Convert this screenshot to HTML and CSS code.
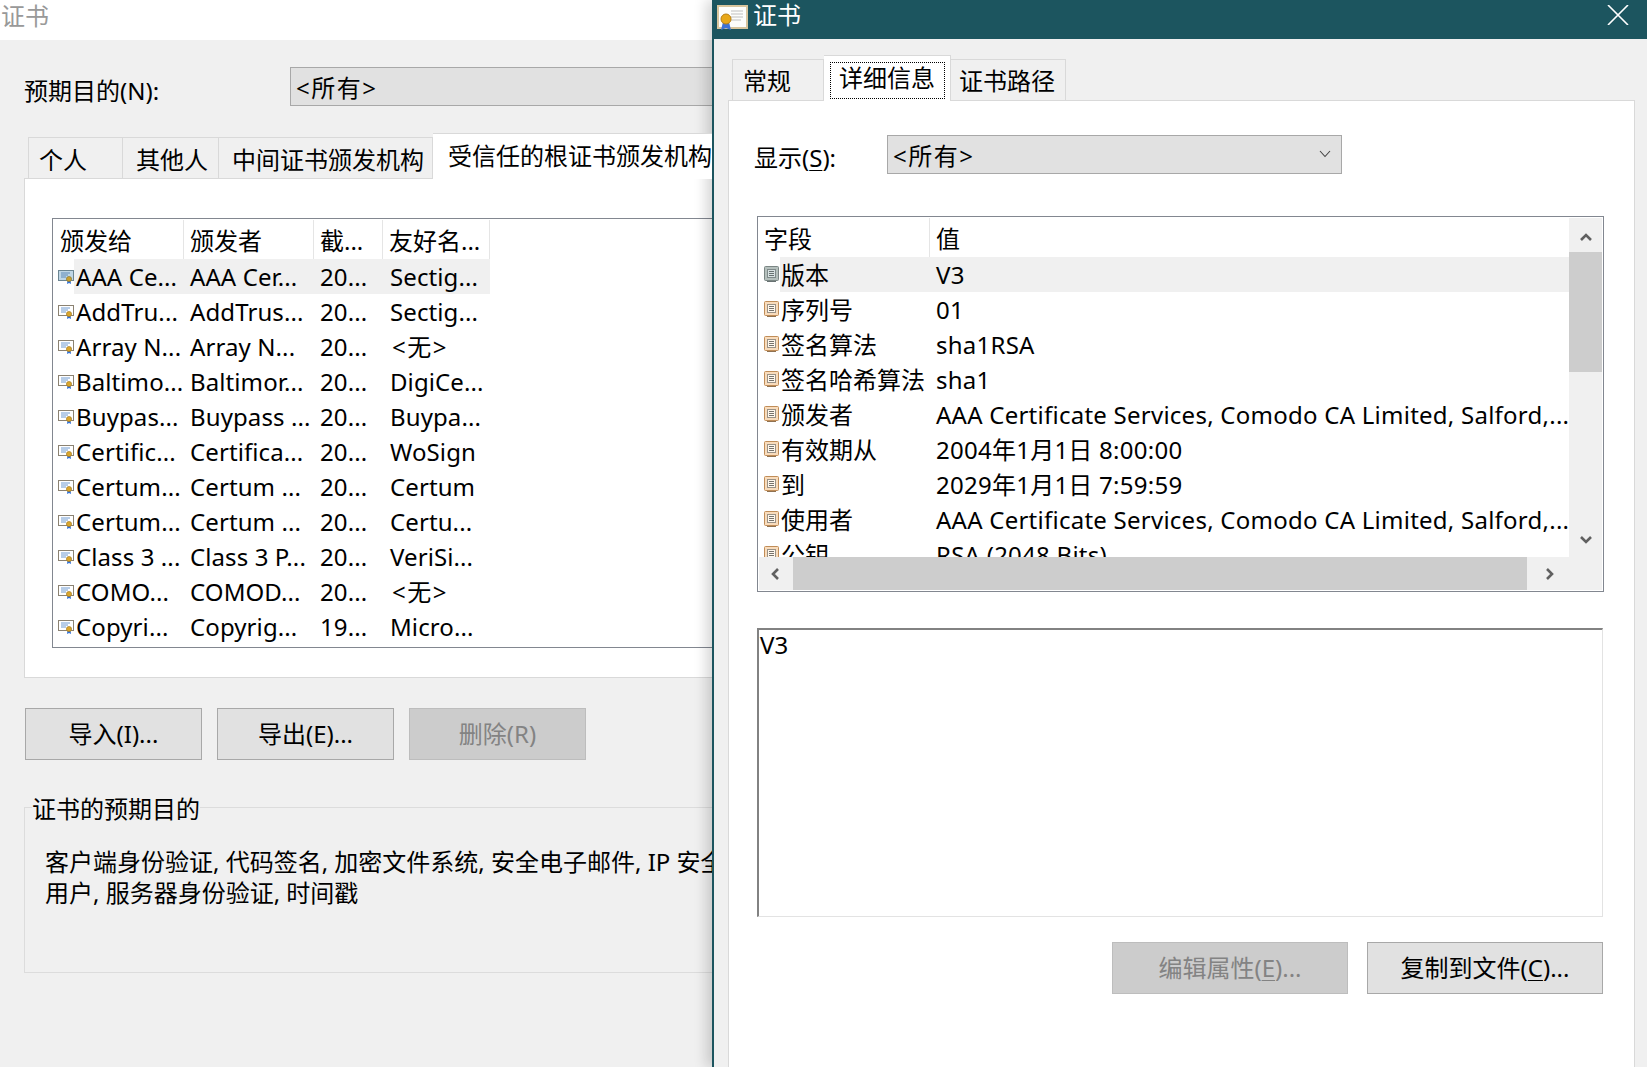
FILE: index.html
```html
<!DOCTYPE html>
<html lang="zh-CN">
<head>
<meta charset="utf-8">
<title>证书</title>
<link rel="stylesheet" href="styles.css">
</head>
<body>
<svg class="defs" width="0" height="0" aria-hidden="true">
  <symbol id="cert" viewBox="0 0 16 14">
    <rect x=".5" y=".5" width="15" height="10" fill="#fff" stroke="#8b8272"/>
    <path d="M3 3h9M3 5h7M3 7h5" stroke="#6f9ad0" fill="none"/>
    <path d="M9.5 10l-.5 4 2-1 2 1-.5-4z" fill="#2f6fd8"/>
    <circle cx="11" cy="9" r="2.6" fill="#d9a52c" stroke="#9c7420" stroke-width=".6"/>
  </symbol>
  <symbol id="cert-dim" viewBox="0 0 16 14">
    <rect x=".5" y=".5" width="15" height="10" fill="#bfd6e6" stroke="#6b8592"/>
    <path d="M3 3h9M3 5h7M3 7h5" stroke="#5f8ab8" fill="none"/>
    <path d="M9.5 10l-.5 4 2-1 2 1-.5-4z" fill="#2f6fd8"/>
    <circle cx="11" cy="9" r="2.6" fill="#c9a030" stroke="#7f7030" stroke-width=".6"/>
  </symbol>
  <symbol id="field" viewBox="0 0 15 16">
    <rect x=".5" y=".5" width="14" height="14" rx="1" fill="#f9dcbc" stroke="#c08d58"/>
    <rect x="3.5" y="3.5" width="8" height="8" fill="#fff8ee" stroke="#9a9286"/>
    <path d="M5 5.5h5M5 7.5h5M5 9.5h5" stroke="#77736c"/>
    <path d="M3 15h9v1H3z" fill="#8f7252"/>
  </symbol>
  <symbol id="field-dim" viewBox="0 0 15 16">
    <rect x=".5" y=".5" width="14" height="14" rx="1" fill="#b5c0bd" stroke="#7b8684"/>
    <rect x="3.5" y="3.5" width="8" height="8" fill="#d8e2e2" stroke="#7f8a8a"/>
    <path d="M5 5.5h5M5 7.5h5M5 9.5h5" stroke="#687272"/>
    <path d="M3 15h9v1H3z" fill="#687272"/>
  </symbol>
</svg>

<section class="win-left">
  <header class="left-title">证书</header>
  <div class="left-body">
    <div class="purpose">
      <span class="purpose-label">预期目的(N):</span>
      <div class="select select-wide">&lt;所有&gt;</div>
    </div>
    <nav class="tabs tabs-left">
      <span class="tab tab-a">个人</span>
      <span class="tab tab-b">其他人</span>
      <span class="tab tab-c">中间证书颁发机构</span>
      <span class="tab tab-d tab-active">受信任的根证书颁发机构</span>
    </nav>
    <div class="panel-left">
      <div class="list-left">
        <div class="head-left">
          <span class="hcell">颁发给</span><span class="hcell">颁发者</span><span class="hcell">截...</span><span class="hcell">友好名...</span>
        </div>
        <div class="row-left sel"><svg class="ico-cert"><use href="#cert-dim"/></svg><span class="c1">AAA Ce...</span><span class="c">AAA Cer...</span><span class="c">20...</span><span class="c">Sectig...</span></div>
        <div class="row-left"><svg class="ico-cert"><use href="#cert"/></svg><span class="c1">AddTru...</span><span class="c">AddTrus...</span><span class="c">20...</span><span class="c">Sectig...</span></div>
        <div class="row-left"><svg class="ico-cert"><use href="#cert"/></svg><span class="c1">Array N...</span><span class="c">Array N...</span><span class="c">20...</span><span class="c c-none">&lt;无&gt;</span></div>
        <div class="row-left"><svg class="ico-cert"><use href="#cert"/></svg><span class="c1">Baltimo...</span><span class="c">Baltimor...</span><span class="c">20...</span><span class="c">DigiCe...</span></div>
        <div class="row-left"><svg class="ico-cert"><use href="#cert"/></svg><span class="c1">Buypas...</span><span class="c">Buypass ...</span><span class="c">20...</span><span class="c">Buypa...</span></div>
        <div class="row-left"><svg class="ico-cert"><use href="#cert"/></svg><span class="c1">Certific...</span><span class="c">Certifica...</span><span class="c">20...</span><span class="c">WoSign</span></div>
        <div class="row-left"><svg class="ico-cert"><use href="#cert"/></svg><span class="c1">Certum...</span><span class="c">Certum ...</span><span class="c">20...</span><span class="c">Certum</span></div>
        <div class="row-left"><svg class="ico-cert"><use href="#cert"/></svg><span class="c1">Certum...</span><span class="c">Certum ...</span><span class="c">20...</span><span class="c">Certu...</span></div>
        <div class="row-left"><svg class="ico-cert"><use href="#cert"/></svg><span class="c1">Class 3 ...</span><span class="c">Class 3 P...</span><span class="c">20...</span><span class="c">VeriSi...</span></div>
        <div class="row-left"><svg class="ico-cert"><use href="#cert"/></svg><span class="c1">COMO...</span><span class="c">COMOD...</span><span class="c">20...</span><span class="c c-none">&lt;无&gt;</span></div>
        <div class="row-left"><svg class="ico-cert"><use href="#cert"/></svg><span class="c1">Copyri...</span><span class="c">Copyrig...</span><span class="c">19...</span><span class="c">Micro...</span></div>
      </div>
    </div>
    <div class="btns-left">
      <button class="btn btn-left">导入(I)...</button>
      <button class="btn btn-left">导出(E)...</button>
      <button class="btn btn-left btn-off">删除(R)</button>
    </div>
    <div class="group">
      <span class="legend">证书的预期目的</span>
      <p class="group-text">客户端身份验证, 代码签名, 加密文件系统, 安全电子邮件, IP 安全隧道终止, IP 安全<br>用户, 服务器身份验证, 时间戳</p>
    </div>
  </div>
</section>

<section class="win-right">
  <header class="right-title">
    <svg class="title-ico" viewBox="0 0 31 25">
      <rect x="1" y="1" width="29" height="22" fill="#fdfdfb" stroke="#d8c49c" stroke-width="2"/>
      <path d="M14 6h12M14 9h12M14 12h12M14 15h10" stroke="#d4d4d4" stroke-width="1.4"/>
      <path d="M6 17l-2 8 5-2 5 2-2-8z" fill="#3f73d6"/>
      <circle cx="9" cy="14" r="5" fill="#e8a818" stroke="#b87f12"/>
    </svg>
    <span class="title-text">证书</span>
    <svg class="close" viewBox="0 0 22 20"><path d="M1 0l20 20M21 0L1 20" stroke="#fff" stroke-width="1.6" fill="none"/></svg>
  </header>
  <div class="right-body">
    <nav class="tabs tabs-right">
      <span class="tab tab-e">常规</span>
      <span class="tab tab-f tab-active"><span class="focus">详细信息</span></span>
      <span class="tab tab-g">证书路径</span>
    </nav>
    <div class="panel-right">
      <div class="show">
        <span class="show-label">显示(<u>S</u>):</span>
        <div class="select select-show">&lt;所有&gt;
          <svg class="chev" viewBox="0 0 12 8"><path d="M1 1l5 5.5L11 1" stroke="#444" stroke-width="1.1" fill="none"/></svg>
        </div>
      </div>
      <div class="list-right">
        <div class="list-main">
          <div class="head-right"><span class="hcell">字段</span><span class="hcell hcell-v">值</span></div>
          <div class="row-right sel"><svg class="ico-field"><use href="#field-dim"/></svg><span class="f">版本</span><span class="v">V3</span></div>
          <div class="row-right"><svg class="ico-field"><use href="#field"/></svg><span class="f">序列号</span><span class="v">01</span></div>
          <div class="row-right"><svg class="ico-field"><use href="#field"/></svg><span class="f">签名算法</span><span class="v">sha1RSA</span></div>
          <div class="row-right"><svg class="ico-field"><use href="#field"/></svg><span class="f">签名哈希算法</span><span class="v">sha1</span></div>
          <div class="row-right"><svg class="ico-field"><use href="#field"/></svg><span class="f">颁发者</span><span class="v">AAA Certificate Services, Comodo CA Limited, Salford,...</span></div>
          <div class="row-right"><svg class="ico-field"><use href="#field"/></svg><span class="f">有效期从</span><span class="v">2004年1月1日 8:00:00</span></div>
          <div class="row-right"><svg class="ico-field"><use href="#field"/></svg><span class="f">到</span><span class="v">2029年1月1日 7:59:59</span></div>
          <div class="row-right"><svg class="ico-field"><use href="#field"/></svg><span class="f">使用者</span><span class="v">AAA Certificate Services, Comodo CA Limited, Salford,...</span></div>
          <div class="row-right"><svg class="ico-field"><use href="#field"/></svg><span class="f">公钥</span><span class="v">RSA (2048 Bits)</span></div>
        </div>
        <div class="vscroll">
          <svg class="arrow" viewBox="0 0 12 8"><path d="M1 7l5-5 5 5" stroke="#606060" stroke-width="2.6" fill="none"/></svg>
          <div class="vthumb"></div>
          <svg class="arrow arrow-down" viewBox="0 0 12 8"><path d="M1 1l5 5 5-5" stroke="#606060" stroke-width="2.6" fill="none"/></svg>
        </div>
        <div class="hscroll">
          <svg class="harrow" viewBox="0 0 8 12"><path d="M7 1L2 6l5 5" stroke="#606060" stroke-width="2.6" fill="none"/></svg>
          <div class="hthumb"></div>
          <svg class="harrow" viewBox="0 0 8 12"><path d="M1 1l5 5-5 5" stroke="#606060" stroke-width="2.6" fill="none"/></svg>
        </div>
        <div class="corner"></div>
      </div>
      <div class="detail">V3</div>
      <div class="btns-right">
        <button class="btn btn-right btn-off">编辑属性(<u>E</u>)...</button>
        <button class="btn btn-right">复制到文件(<u>C</u>)...</button>
      </div>
    </div>
  </div>
</section>
</body>
</html>
```

FILE: styles.css
```css
* { box-sizing: border-box; }
html, body { margin: 0; height: 100%; }
body {
  display: flex;
  width: 1647px;
  height: 1067px;
  overflow: hidden;
  background: #f0f0f0;
  color: #000;
  font: 24px/32px "Noto Sans", "Noto Sans CJK SC", sans-serif;
}
.defs { position: absolute; }
u { text-underline-offset: 3px; text-decoration-thickness: 1px; }

/* left window */
.win-left { width: 712px; flex: none; overflow: hidden; }
.left-title {
  height: 40px;
  background: #fff;
  color: #999;
  padding-left: 1px;
  line-height: 32px;
}
.left-body { width: 1000px; padding-left: 24px; }
.purpose { display: flex; align-items: center; height: 39px; margin-top: 27px; }
.purpose-label { width: 266px; flex: none; padding-top: 8px; }
.select {
  height: 39px;
  background: #e1e1e1;
  border: 1px solid #a8a8a8;
  line-height: 37px;
  padding: 1px 0 0 5px;
  letter-spacing: 1.5px;
  position: relative;
}
.select-wide { width: 600px; }

.tabs { display: flex; align-items: flex-end; }
.tab {
  height: 41px;
  border: 1px solid #d9d9d9;
  border-bottom: 0;
  border-left: 0;
  background: #f0f0f0;
  padding: 6px 0 0 13px;
  line-height: 32px;
  white-space: nowrap;
}
.tab-active {
  background: #fff;
  position: relative;
  z-index: 1;
  height: 46px;
  margin-bottom: -1px;
  padding-top: 6px;
}
.tabs-left { height: 45px; margin-top: 27px; padding-left: 4px; }
.tab-a { width: 95px; border-left: 1px solid #d9d9d9; padding-left: 10px; }
.tab-b { width: 96px; }
.tab-c { width: 214px; }
.tab-d { width: 400px; padding-left: 15px; }

.panel-left {
  height: 500px;
  background: #fff;
  border: 1px solid #d9d9d9;
  padding: 39px 0 0 27px;
}
.list-left {
  width: 900px;
  height: 430px;
  border: 1px solid #828790;
  padding-top: 1px;
  overflow: hidden;
}
.head-left {
  display: grid;
  grid-template-columns: 131px 130px 69px 107px;
  height: 39px;
  width: 437px;
}
.hcell {
  border-right: 1px solid #e5e5e5;
  padding: 5px 0 0 6px;
  line-height: 32px;
  white-space: nowrap;
}
.head-left .hcell:first-child { padding-left: 7px; }
.row-left {
  display: grid;
  grid-template-columns: 21px 110px 130px 69px 107px;
  height: 35px;
  line-height: 35px;
}
.ico-cert { width: 16px; height: 14px; margin: 11px 0 0 5px; }
.c1, .c, .f, .v { white-space: nowrap; overflow: hidden; }
.c1 { padding-left: 2px; }
.c1, .c { letter-spacing: .1px; }
.c { padding-left: 6px; }
.c:last-child { padding-left: 7px; }
.c.c-none { padding-left: 9px; letter-spacing: 1.5px; }
.sel > span { background: #f0f0f0; }

.btns-left { display: flex; gap: 15px; margin-top: 30px; margin-left: 1px; }
.btn {
  font: inherit;
  line-height: 32px;
  color: #000;
  background: #e1e1e1;
  border: 1px solid #a8a8a8;
  padding: 0;
  white-space: nowrap;
}
.btn-left { width: 177px; height: 52px; }
.btn-off { background: #cccccc; border-color: #bdbdbd; color: #838383; }

.group {
  position: relative;
  height: 166px;
  margin-top: 47px;
  border: 1px solid #dcdcdc;
  padding: 38px 0 0 20px;
}
.legend {
  position: absolute;
  left: 7px;
  top: -15px;
  background: #f0f0f0;
  white-space: nowrap;
}
.group-text { margin: 0; line-height: 31px; white-space: nowrap; }

/* right window */
.win-right {
  flex: 1;
  min-width: 0;
  border-left: 2px solid #1c555f;
  box-shadow: -6px 0 12px rgba(0, 0, 0, .16);
  position: relative;
  display: flex;
  flex-direction: column;
}
.right-title {
  height: 39px;
  flex: none;
  margin-left: -2px;
  background: #1c555f;
  color: #fff;
  display: flex;
  align-items: center;
  padding: 0 18px 0 5px;
}
.title-ico { width: 31px; height: 25px; flex: none; margin-top: -5px; }
.title-text { margin-left: 5px; margin-top: -10px; }
.close { width: 22px; height: 20px; margin-left: auto; margin-top: -9px; }
.right-body { flex: 1; padding: 16px 12px 0 14px; display: flex; flex-direction: column; background: #f0f0f0; }

.tabs-right { height: 45px; padding-left: 4px; }
.tabs-right .tab-e, .tabs-right .tab-g { padding-top: 5px; }
.tab-e { width: 92px; border-left: 1px solid #d9d9d9; padding-left: 10px; }
.tab-f { width: 127px; padding: 6px 0 0 6px; border-right: 1px solid #d9d9d9; border-top: 1px solid #d9d9d9; }
.focus {
  display: block;
  width: 115px;
  height: 37px;
  border: 1px dotted #000;
  line-height: 30px;
  padding-left: 8px;
}
.tab-g { width: 115px; padding-left: 8px; }

.panel-right {
  flex: 1;
  background: #fff;
  border: 1px solid #d9d9d9;
  border-bottom: 0;
  padding: 34px 31px 0 28px;
}
.show { display: flex; align-items: center; height: 39px; margin-left: -3px; }
.show-label { width: 133px; flex: none; padding-top: 7px; line-height: 32px; }
.select-show { width: 455px; }
.chev { position: absolute; right: 10px; top: 14px; width: 12px; height: 8px; }

.list-right {
  margin-top: 42px;
  width: 847px;
  height: 376px;
  border: 1px solid #828790;
  padding: 1px;
  display: grid;
  grid-template-columns: 810px 1fr;
  grid-template-rows: 339px 33px;
  background: #fff;
}
.list-main { overflow: hidden; }
.head-right {
  display: grid;
  grid-template-columns: 171px 1fr;
  height: 39px;
}
.head-right .hcell { padding-left: 5px; }
.head-right .hcell-v { border-right: 0; padding-left: 6px; }
.row-right {
  display: grid;
  grid-template-columns: 21px 150px 639px;
  height: 35px;
  line-height: 35px;
}
.ico-field { width: 15px; height: 16px; margin: 9px 0 0 5px; }
.f { padding-left: 1px; }
.v { padding-left: 6px; letter-spacing: .25px; }
.vscroll {
  background: #f0f0f0;
  display: flex;
  flex-direction: column;
  align-items: center;
  position: relative;
}
.arrow { width: 12px; height: 8px; margin-top: 15px; flex: none; }
.vthumb { width: 100%; height: 120px; background: #cdcdcd; margin-top: 11px; flex: none; }
.arrow-down { margin-top: auto; margin-bottom: 13px; }
.hscroll {
  background: #f0f0f0;
  display: flex;
  align-items: center;
  padding: 0 0 0 12px;
}
.harrow { width: 8px; height: 12px; flex: none; }
.hthumb { width: 734px; height: 100%; background: #cdcdcd; margin: 0 19px 0 14px; flex: none; }
.corner { background: #f0f0f0; }

.detail {
  margin-top: 36px;
  width: 846px;
  height: 289px;
  border: 1px solid #e3e3e3;
  border-top: 2px solid #828282;
  border-left: 2px solid #828282;
  padding-left: 1px;
  line-height: 30px;
}
.btns-right { display: flex; justify-content: flex-end; gap: 19px; width: 846px; margin-top: 25px; }
.btn-right { width: 236px; height: 52px; }
```
